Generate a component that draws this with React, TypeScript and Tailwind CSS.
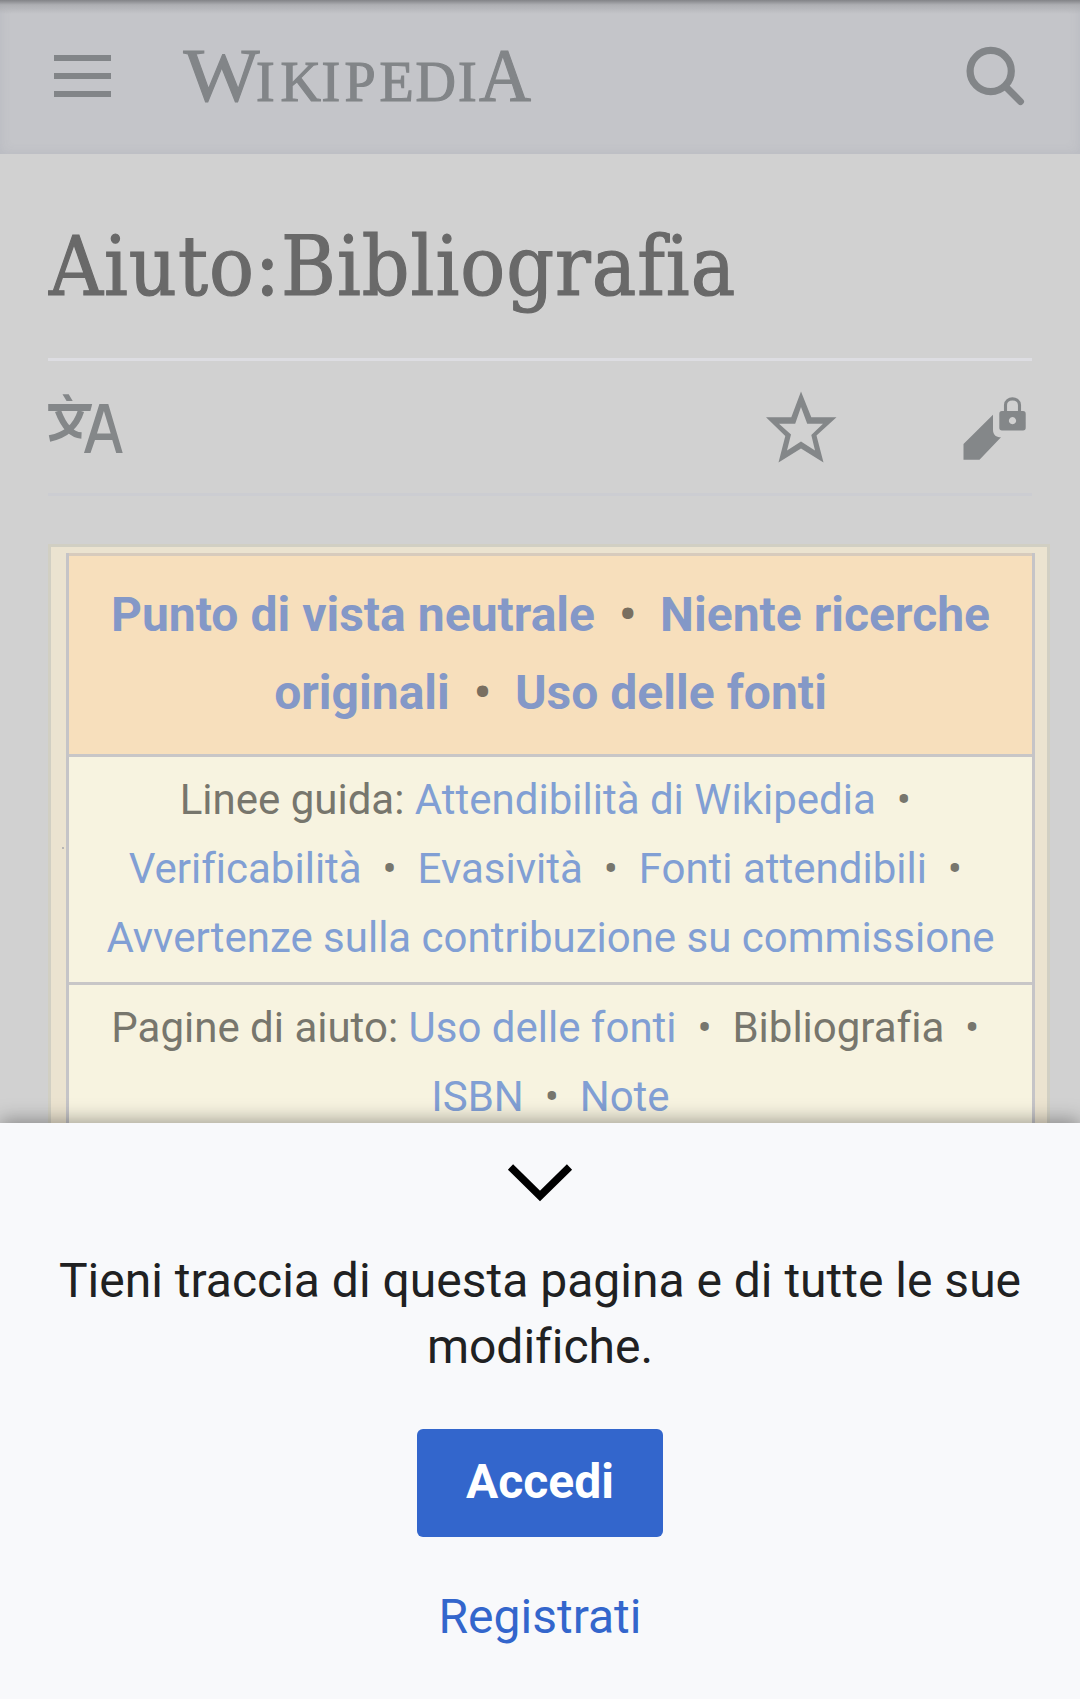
import React from "react";

const A = ({ children }: { children: React.ReactNode }) => <a className="text-[#819fd4]">{children}</a>;
const Dot = () => <span className="whitespace-pre">{"\u00a0 • "}</span>;

function Wordmark() {
  return (
    <svg width="380" height="110" viewBox="170 22 380 110" fill="#828588" stroke="#828588" strokeWidth="1.2" fontFamily="Liberation Serif, serif">
      <text fontSize="77" y="101" x="183.500" textLength="76" lengthAdjust="spacingAndGlyphs">W</text>
      <text fontSize="56" y="101" x="256 280.500 321.500 344.500 379.500 415.500 458">IKIPEDI</text>
      <text fontSize="77" y="101" x="479" textLength="52" lengthAdjust="spacingAndGlyphs">A</text>
    </svg>
  );
}

function Header() {
  return (
    <header className="relative flex h-[154px] items-center bg-[#c4c5c9] shadow-[inset_0_0_12px_rgba(100,110,130,0.12)]">
      <div className="absolute inset-x-0 top-0 h-[14px] bg-linear-to-b from-[#828387] via-[#a9aaae]/80 via-35% to-[#c4c5c9]/0" />
      <svg className="mb-[2px] ml-[54px]" width="57" height="42" viewBox="0 0 57 42" fill="#828588">
        <path d="M0 0h57v6H0zM0 18h57v6H0zM0 36h57v6H0z" />
      </svg>
      <div className="ml-[59px]"><Wordmark /></div>
      <svg className="mr-[54px] ml-auto" width="60" height="62" viewBox="966 46 60 62" fill="none" stroke="#828588">
        <circle cx="990.700" cy="71" r="20.600" strokeWidth="7.200" />
        <path d="M1005.500 86.500L1020.500 101.600" strokeWidth="7" strokeLinecap="round" />
      </svg>
    </header>
  );
}

function Actions() {
  return (
    <div className="flex h-[135px] items-start border-b-[3px] border-[#cccdd2]">
      <svg className="mt-[30px]" width="76" height="64" viewBox="48 391 76 64" fill="#848789">
        <path d="M62.500 394.300h6.200l4 6.700h-6.100z M48.200 404h44l-1.800 7H48.200z" />
        <path d="M58 411C64 427 71 435 81.500 435.500M81 411C76 427 66 435 49.500 438.500" fill="none" stroke="#848789" strokeWidth="6.400" />
        <path fillRule="evenodd" d="M84 453l15.400-49h8.900l14.400 49h-6.500l-3.900-13H95l-4.500 13zM97 433.500h13.700l-6.800-22.500z" />
      </svg>
      <svg className="mt-[30px] ml-auto" width="72" height="74" viewBox="765 391 72 74">
        <path fillRule="evenodd" fill="#848789" d="M801 391.500L811.300 417.300H836.500L816.500 435.500L823.500 462.500L801 448.500L778.500 462.500L785.300 436L766 417.300H791.300zM801 407L795.200 423.700H779L791 434.500L787 450.500L801 441.500L815 450.500L811.300 435L823 423.700H807.200z" />
      </svg>
      <svg className="mt-[34px] mr-[5px] ml-[126px]" width="64" height="66" viewBox="963 395 64 66" fill="#848789">
        <path d="M963.500 444L993 414.700v15c0 5 3 7.500 8 7.500L979.500 459.700h-16z" />
        <path fillRule="evenodd" d="M1002 411h21q2.700 0 2.700 2.700v14.100q0 2.700-2.700 2.700h-21q-2.700 0-2.700-2.700v-14.100q0-2.700 2.700-2.700zM1012.500 417.100a3.600 3.600 0 1 0 .01 0z" />
        <path d="M1005.500 412v-7c0-8.200 14-8.200 14 0v7" fill="none" stroke="#848789" strokeWidth="3.100" />
      </svg>
    </div>
  );
}

function HelpBox() {
  return (
    <section className="relative mt-[48px] h-[700px] w-[1002px] border-[3px] border-[#d1cfc3] bg-[#ebe3d0] pt-[6px] pr-[12px] pl-[15px] text-center text-[#77766d]">
      <span className="absolute top-[300px] left-[11px] size-[2px] bg-[#b9b7b4]" />
      <div className="border-x-[3px] border-[#c5c4c7]">
        <div className="h-[204px] border-y-[3px] border-t-[#d7cbbd] border-b-[#c8c6c7] bg-[#f7dfbc] pt-[20px] text-[48px] leading-[78px] font-bold tracking-[0.02px] text-[#796f60]">
          <p><span className="text-[#8498c7]">Punto di vista neutrale</span><Dot /> <span className="text-[#8498c7]">Niente ricerche</span></p>
          <p><span className="text-[#8498c7]">originali</span><Dot /> <span className="text-[#8498c7]">Uso delle fonti</span></p>
        </div>
        <div className="h-[228px] border-b-[3px] border-[#c8c6c7] bg-[#f7f3e0] pt-[8px] text-[42px] leading-[69px]">
          <p>Linee guida: <A>Attendibilità di Wikipedia</A><Dot /></p>
          <p><A>Verificabilità</A><Dot /> <A>Evasività</A><Dot /> <A>Fonti attendibili</A><Dot /></p>
          <p><A>Avvertenze sulla contribuzione su commissione</A></p>
        </div>
        <div className="h-[250px] bg-[#f7f3e0] pt-[8px] text-[42px] leading-[69px]">
          <p>Pagine di aiuto: <A>Uso delle fonti</A><Dot /> Bibliografia<Dot /></p>
          <p><A>ISBN</A><Dot /> <A>Note</A></p>
        </div>
      </div>
    </section>
  );
}

function LoginDrawer() {
  return (
    <aside className="absolute inset-x-0 bottom-0 flex h-[576px] flex-col items-center bg-[#f8f9fb] text-center text-[#202122] shadow-[0_-3px_18px_rgba(0,0,0,0.35)]">
      <svg className="mt-[41px]" width="66" height="38" viewBox="0 0 66 38" fill="none" stroke="#000" strokeWidth="7.400">
        <path d="M3.500 3L33 32L62.500 3" />
      </svg>
      <p className="mt-[46px] w-full text-[48px] leading-[66px]">Tieni traccia di questa pagina e di tutte le sue<br />modifiche.</p>
      <button className="mt-[49px] h-[108px] w-[246px] rounded-[6px] bg-[#3366cc] pb-[2px] text-[48px] font-bold text-white">Accedi</button>
      <a className="mt-[44px] text-[48px] leading-[72px] text-[#3366cc]">Registrati</a>
    </aside>
  );
}

export default function App() {
  return (
    <div className="relative h-[1699px] w-[1080px] overflow-hidden bg-[#d1d1d1] font-['Roboto',sans-serif] [font-variant-ligatures:none]">
      <Header />
      <main className="px-[48px]">
        <h1 className="h-[207px] border-b-[3px] border-[#dddde2] pt-[58px] pl-px text-[83px] leading-[110px] tracking-[1px] whitespace-nowrap text-[#696969] [-webkit-text-stroke:1.2px_#696969] [font-family:'DejaVu_Serif_Condensed','DejaVu_Serif',serif]">Aiuto:Bibliografia</h1>
        <Actions />
        <HelpBox />
      </main>
      <LoginDrawer />
    </div>
  );
}
